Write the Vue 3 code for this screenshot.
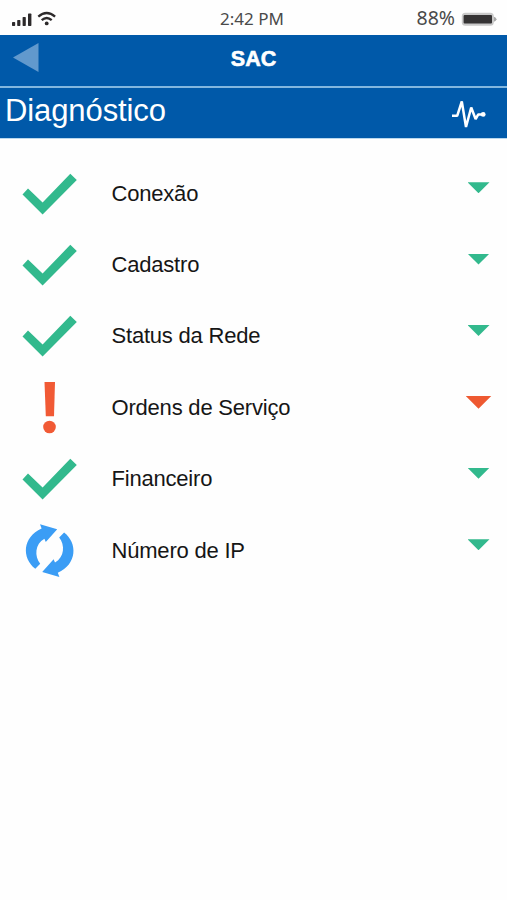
<script setup>
const items = [
  { label: 'Conexão', state: 'ok' },
  { label: 'Cadastro', state: 'ok' },
  { label: 'Status da Rede', state: 'ok' },
  { label: 'Ordens de Serviço', state: 'alert' },
  { label: 'Financeiro', state: 'ok' },
  { label: 'Número de IP', state: 'sync' },
]
</script>

<template>
  <div class="screen">
    <div class="status">
      <svg class="signal" width="60" height="35" viewBox="0 0 60 35">
        <g fill="#2d2a2b">
          <rect x="12" y="22" width="3.2" height="4" rx=".7" />
          <rect x="17.2" y="20" width="3.2" height="6" rx=".7" />
          <rect x="22.6" y="17" width="3.2" height="9" rx=".7" />
          <rect x="28" y="13.5" width="3.4" height="12.5" rx=".7" />
          <circle cx="46.7" cy="23.4" r="1.9" />
        </g>
        <g fill="none" stroke="#2d2a2b" stroke-width="2.3">
          <path d="M38.3 16.6Q46.7 9.4 55.1 16.6" />
          <path d="M41.7 20.2Q46.7 15.8 51.7 20.2" />
        </g>
      </svg>
      <span class="time">2:42 PM</span>
      <div class="power">
        <span class="percent">88%</span>
        <svg width="36" height="16" viewBox="0 0 36 16">
          <path d="M32.5 5.5Q35.5 6.5 35.5 8.2T32.5 11z" fill="#a8a8a8" />
          <rect x=".8" y="1.7" width="32" height="13" rx="3.5" fill="#c9c9c9" />
          <rect x="2.6" y="3.9" width="28.4" height="8.7" rx="1" fill="#353334" />
        </svg>
      </div>
    </div>

    <header class="bar">
      <svg class="back" width="26" height="30" viewBox="0 0 26 30">
        <path d="M0 14.5L25.5 0V29z" fill="#6199cd" />
      </svg>
      <h1>SAC</h1>
    </header>

    <div class="section">
      <h2>Diagnóstico</h2>
      <svg class="pulse" width="36" height="36" viewBox="0 0 36 36">
        <path d="M1 18.8H6.2L10.8 4.5L15 30L20.2 10.5L24.6 22L27.3 17.4H32" fill="none" stroke="#fff" stroke-width="2.5" stroke-linejoin="bevel" />
        <circle cx="32.2" cy="17.4" r="2.4" fill="#fff" />
      </svg>
    </div>

    <ul>
      <li v-for="item in items" :key="item.label">
        <svg class="icon" width="58" height="60" viewBox="0 0 58 60">
          <path v-if="item.state === 'ok'" d="M2.5 31.4L8 25.4L22.6 39.6L50.3 10.8L56.8 17L22.6 51.5z" fill="#32b98d" />
          <g v-else-if="item.state === 'alert'" fill="#f15a35">
            <path d="M24.5 5H35L34 39.3H25.8z" />
            <circle cx="29.5" cy="50" r="6.3" />
          </g>
          <g v-else fill="#3b9df5">
            <path id="cycle" d="M15.3 48.7C1.5 38 2.3 17 21.6 8.4L20 4.2L37.2 9.2L25.8 22L24.4 18.8C14.8 24 14.3 36.5 20.2 43.7z" />
            <use href="#cycle" transform="rotate(180 29.7 30.6)" />
          </g>
        </svg>
        <span class="label">{{ item.label }}</span>
        <span class="caret" :class="{ alert: item.state === 'alert' }"></span>
      </li>
    </ul>
  </div>
</template>

<style>
body { background: #fefefe; }
</style>

<style scoped>
.screen {
  width: 507px;
  height: 900px;
  overflow: hidden;
  background: #fefefe;
  font-family: "Liberation Sans", Arial, sans-serif;
}
.status {
  display: grid;
  grid-template-columns: 1fr auto 1fr;
  align-items: center;
  height: 35px;
  font-family: "Noto Sans", sans-serif;
  color: #4a4a4a;
}
.signal { display: block; }
.time {
  margin-right: 3px;
  padding-top: 2px;
  font-size: 17px;
  line-height: 33px;
}
.power {
  display: flex;
  justify-content: flex-end;
  align-items: center;
  gap: 6px;
  padding-right: 10px;
}
.power svg { margin-top: 2px; }
.percent {
  font-size: 19.5px;
  line-height: 30px;
}
.bar {
  display: grid;
  grid-template-columns: 1fr auto 1fr;
  height: 51px;
  background: #0059a9;
  border-bottom: 2px solid #82b7df;
}
.back { margin: 8px 0 0 13px; }
h1 {
  margin: 0;
  color: #fff;
  font-size: 21.5px;
  line-height: 48px;
  -webkit-text-stroke: .6px #fff;
}
.section {
  display: flex;
  justify-content: space-between;
  height: 50px;
  background: #0059a9;
  border-bottom: 1px solid #b9d8ee;
}
h2 {
  margin: 0 0 0 5px;
  color: #fff;
  font-size: 31px;
  font-weight: 400;
  line-height: 46px;
  letter-spacing: -0.1px;
}
.pulse { margin: 9px 20px 0 0; }
ul {
  margin: 0;
  padding: 19px 0 0;
  list-style: none;
}
li {
  display: flex;
  align-items: center;
  height: 71.4px;
}
.icon {
  flex: none;
  margin: 0 0 2px 20px;
}
.label {
  flex: 1;
  margin-left: 33.5px;
  color: #161616;
  font-size: 22px;
  line-height: 30px;
  letter-spacing: -0.2px;
}
.caret {
  width: 22px;
  height: 11px;
  margin: 0 17.5px 12px 0;
  background: #32b98d;
  clip-path: polygon(0 0, 100% 0, 50% 100%);
}
.caret.alert {
  width: 26px;
  height: 13px;
  margin: 0 15.5px 11px 0;
  background: #ee5931;
}
</style>
